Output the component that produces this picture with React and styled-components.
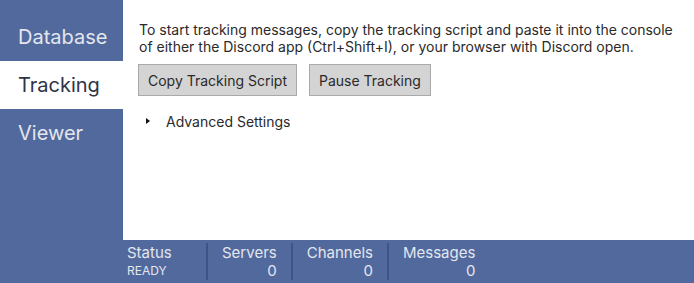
import React from 'react'
import styled, { createGlobalStyle } from 'styled-components'

const Global = createGlobalStyle`
    html, body {
        margin: 0;
        padding: 0;
        height: 100%;
        overflow: hidden;
    }
    body {
        font-family: Inter, "Noto Sans", sans-serif;
    }
    #root {
        height: 100%;
    }
`

const Page = styled.div`
    display: grid;
    grid-template-columns: 123px 1fr;
    grid-template-rows: 1fr 43px;
    height: 283px;
    width: 694px;
    background-color: #52699d;
`

const Sidebar = styled.nav`
    grid-row: 1 / 3;
    display: flex;
    flex-direction: column;
    padding-top: 13px;
`

const NavItem = styled.div`
    height: 48px;
    display: flex;
    align-items: center;
    padding-left: 18px;
    font-size: 20px;
    color: ${props => props.active ? '#2f3446' : '#e3e6ee'};
    background-color: ${props => props.active ? '#ffffff' : 'transparent'};
    cursor: pointer;
`

const Content = styled.main`
    background-color: #ffffff;
    padding: 21px 16px 0 16px;
    font-size: 14px;
    color: #2a2a2a;
`

const Intro = styled.p`
    margin: 0;
    line-height: 17px;
`

const Buttons = styled.div`
    display: flex;
    gap: 12px;
    margin-top: 9px;
    margin-left: -1px;
`

const Button = styled.button`
    height: 32px;
    padding: 0 9px;
    font-family: inherit;
    font-size: 14px;
    color: #2a2a2a;
    background-color: #d4d4d4;
    border: 1px solid #a9a9a9;
    border-radius: 0;
`

const Details = styled.details`
    margin-top: 15px;
`

const Summary = styled.summary`
    list-style: none;
    display: flex;
    align-items: center;
    gap: 16px;
    padding-left: 7px;
    height: 20px;
    cursor: pointer;
    &::-webkit-details-marker {
        display: none;
    }
`

const Arrow = styled.span`
    width: 0;
    height: 0;
    border-top: 3.5px solid transparent;
    border-bottom: 3.5px solid transparent;
    border-left: 4px solid #111;
`

const StatusBar = styled.footer`
    display: flex;
    padding: 3px 0 3px 4px;
    color: #e3e6ee;
`

const Stat = styled.div`
    display: flex;
    flex-direction: column;
    min-width: ${props => props.width || 0}px;
    padding: ${props => props.first ? '0' : '0 14px 0 14px'};
    border-right: ${props => props.last ? 'none' : '2px solid #3f5386'};
`

const StatLabel = styled.div`
    font-size: 15px;
    line-height: 19px;
`

const StatValue = styled.div`
    font-size: ${props => props.small ? '12px' : '15px'};
    line-height: 18px;
    text-align: ${props => props.small ? 'left' : 'right'};
`

export default function App () {
    return (
        <Page>
            <Global />
            <Sidebar>
                <NavItem>Database</NavItem>
                <NavItem active>Tracking</NavItem>
                <NavItem>Viewer</NavItem>
            </Sidebar>
            <Content>
                <Intro>
                    To start tracking messages, copy the tracking script and paste it into the console of either the Discord app (Ctrl+Shift+I), or your browser with Discord open.
                </Intro>
                <Buttons>
                    <Button>Copy Tracking Script</Button>
                    <Button>Pause Tracking</Button>
                </Buttons>
                <Details>
                    <Summary><Arrow />Advanced Settings</Summary>
                </Details>
            </Content>
            <StatusBar>
                <Stat first width={79}>
                    <StatLabel>Status</StatLabel>
                    <StatValue small>READY</StatValue>
                </Stat>
                <Stat>
                    <StatLabel>Servers</StatLabel>
                    <StatValue>0</StatValue>
                </Stat>
                <Stat>
                    <StatLabel>Channels</StatLabel>
                    <StatValue>0</StatValue>
                </Stat>
                <Stat last>
                    <StatLabel>Messages</StatLabel>
                    <StatValue>0</StatValue>
                </Stat>
            </StatusBar>
        </Page>
    )
}
